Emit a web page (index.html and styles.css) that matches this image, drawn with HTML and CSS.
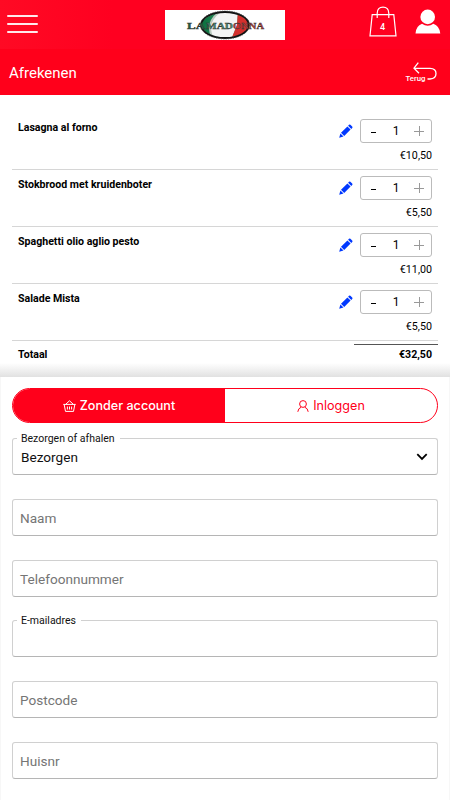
FILE: index.html
```html
<!DOCTYPE html>
<html lang="nl">
<head>
<meta charset="utf-8">
<title>Afrekenen</title>
<link rel="stylesheet" href="styles.css">
</head>
<body>
<svg class="defs" width="0" height="0">
  <symbol id="pencil" viewBox="0 0 14 14"><path d="M10 .8Q10.7.1 11.4.8L13.2 2.6Q13.9 3.3 13.2 4L12.3 4.9 9.1 1.7ZM8.4 2.4 11.6 5.6 5.2 12 2 8.8ZM1.4 9.5 4.5 12.6.2 13.8Z" fill="#0038ff"/></symbol>
</svg>
<header class="topbar">
  <div class="burger"><i></i><i></i><i></i></div>
  <svg class="logo" width="120" height="30" viewBox="0 0 120 30">
    <defs>
      <clipPath id="oval"><ellipse cx="60" cy="15" rx="23.5" ry="12.5"/></clipPath>
      <linearGradient id="silk"><stop offset="0" stop-color="#096b3b"/><stop offset=".3" stop-color="#1d8551"/><stop offset="1" stop-color="#7fae93"/></linearGradient>
    </defs>
    <rect width="120" height="30" fill="#fff"/>
    <g clip-path="url(#oval)"><rect x="35" width="50" height="30" fill="url(#silk)"/><path d="M57 0Q38 13 49 30H66L72 15 73 0Z" fill="#f4f4f4"/><path d="M57 0Q38 13 49 30" fill="none" stroke="#b9c8be" stroke-width="2"/><path d="M73 0 72 15 66 30H86V0Z" fill="#d4302d"/></g>
    <ellipse cx="60" cy="15" rx="23.8" ry="13" fill="none" stroke="#111" stroke-width="1.8"/>
    <ellipse cx="60" cy="15" rx="24.6" ry="13.9" fill="none" stroke="#444" stroke-width=".9" stroke-dasharray="1.2 1.2"/>
    <g class="logo-text"><text x="22" y="19" textLength="18" lengthAdjust="spacingAndGlyphs" fill="#216442">LA</text><text x="41" y="19" textLength="27" lengthAdjust="spacingAndGlyphs" fill="#4d8f70">MAD</text><text x="68" y="19" textLength="31" lengthAdjust="spacingAndGlyphs" fill="#bd403b">ONNA</text></g>
  </svg>
  <div class="actions">
    <svg width="28" height="31" viewBox="0 0 28 31"><g fill="none" stroke="#fff" stroke-width="1.2"><path d="M3.2 8.6H24.8L27 29.8H1Z"/><path d="M8.2 12V7.2Q8.4 1.2 14 1.2T19.8 7.2V12"/></g><text class="count" x="13.5" y="24" text-anchor="middle">4</text></svg>
    <svg width="26" height="25" viewBox="0 0 26 25"><circle cx="12.7" cy="7.9" r="7.3" fill="#fff"/><path d="M.5 24.5Q1 17 7 14.8 12.7 18.5 18.4 14.8 24.5 17 25.3 24.5Z" fill="#fff"/></svg>
  </div>
</header>
<div class="titlebar">
  <h1>Afrekenen</h1>
  <svg class="back" width="33" height="20" viewBox="0 0 33 20"><path d="M13.3.7 9 6.2 14 11.2M9.2 6.3H25Q31 6.4 31 11.5T25 17H22.5" fill="none" stroke="#fff" stroke-width="1.3"/><text x="0.5" y="18.8" textLength="20" lengthAdjust="spacingAndGlyphs">Terug</text></svg>
</div>
<main>
  <section class="cart">
    <div class="item"><b>Lasagna al forno</b><svg class="pencil"><use href="#pencil"/></svg><div class="side"><div class="stepper"><span class="minus"></span><span>1</span><span class="plus"></span></div><div class="price">€10,50</div></div></div>
    <div class="item"><b>Stokbrood met kruidenboter</b><svg class="pencil"><use href="#pencil"/></svg><div class="side"><div class="stepper"><span class="minus"></span><span>1</span><span class="plus"></span></div><div class="price">€5,50</div></div></div>
    <div class="item"><b>Spaghetti olio aglio pesto</b><svg class="pencil"><use href="#pencil"/></svg><div class="side"><div class="stepper"><span class="minus"></span><span>1</span><span class="plus"></span></div><div class="price">€11,00</div></div></div>
    <div class="item"><b>Salade Mista</b><svg class="pencil"><use href="#pencil"/></svg><div class="side"><div class="stepper"><span class="minus"></span><span>1</span><span class="plus"></span></div><div class="price">€5,50</div></div></div>
    <div class="total"><b>Totaal</b><b class="sum">€32,50</b></div>
  </section>
  <section class="checkout">
    <div class="tabs">
      <div class="tab active"><svg width="13" height="12" viewBox="0 0 13 12" fill="none" stroke="#fff"><path d="M.3 4.4H12.7M1.2 4.6 2.5 11.4H10.5L11.8 4.6M2.8 4.2 6.5.8 10.2 4.2M4.4 6.5V9.5M6.5 6.5V9.5M8.6 6.5V9.5"/></svg><span class="guest">Zonder account</span></div>
      <div class="tab"><svg width="12" height="12" viewBox="0 0 12 12" fill="none" stroke="#ff001b"><circle cx="6" cy="4" r="3.4"/><path d="M.8 11.8Q1.2 8.2 4.2 7.2M11.2 11.8Q10.8 8.2 7.8 7.2"/></svg><span class="login">Inloggen</span></div>
    </div>
    <form>
      <div class="field"><label>Bezorgen of afhalen</label><span class="value">Bezorgen</span><svg class="chevron" width="12" height="8" viewBox="0 0 12 8"><path d="M1.3 1.2 6 5.9 10.7 1.2" fill="none" stroke="#000" stroke-width="1.8"/></svg></div>
      <div class="field"><span>Naam</span></div>
      <div class="field"><span>Telefoonnummer</span></div>
      <div class="field"><label>E-mailadres</label></div>
      <div class="field"><span>Postcode</span></div>
      <div class="field"><span>Huisnr</span></div>
    </form>
  </section>
</main>
</body>
</html>
```
FILE: styles.css
```css
* { box-sizing: border-box; }
body { margin: 0; height: 800px; overflow: hidden; background: #fff; color: #000; font-family: Roboto, sans-serif; font-size: 11px; }
svg { display: block; flex: none; }
.defs { position: absolute; }
.topbar { height: 49px; background: linear-gradient(90deg, #ff0a24, #ff0020 25%); display: grid; grid-template-columns: 165px 120px 1fr; align-items: start; }
.burger { padding: 15px 0 0 7px; display: grid; gap: 6px; }
.burger i { width: 31px; height: 2px; background: #ffe9ec; border-radius: 1px; }
.logo { margin-top: 10px; }
.logo-text { font: bold 8.5px "Liberation Serif", serif; stroke: #333; stroke-width: .35px; }
.actions { display: flex; justify-content: flex-end; gap: 18px; padding: 6px 9px 0 0; }
.actions svg + svg { margin-top: 3px; }
.count { font-size: 9px; font-weight: 500; fill: #fff; }
.titlebar { height: 46px; background: #ff001b; color: #fff; display: flex; align-items: center; justify-content: space-between; padding: 0 12px 0 9px; }
h1 { margin: 1px 0 0; font-size: 15px; font-weight: 400; line-height: 20px; }
.back { margin-top: -1px; }
.back text { font: 500 7.6px Roboto, sans-serif; fill: #fff; }
.cart { padding: 18px 12px 0; height: 282px; background: linear-gradient(#fff, #e1e1e1) bottom / 100% 14px no-repeat; }
.item { height: 57px; border-bottom: 1px solid #d6d6d6; display: flex; padding: 6px 6px 0; align-items: flex-start; }
.item b { flex: 1; line-height: 14px; font-size: 10.6px; margin-top: 1.5px; }
.pencil { width: 14px; height: 14px; margin: 5px 7px 0 0; }
.side { width: 72px; }
.stepper { height: 24px; border: 1px solid #bbb; border-radius: 3px; display: grid; grid-template-columns: 24px 22px 24px; align-items: center; justify-items: center; font-size: 12px; }
.minus { width: 5px; height: 1px; background: #000; margin-top: 3px; }
.plus { width: 10px; height: 10px; background: linear-gradient(#999, #999) center / 10px 1px no-repeat, linear-gradient(#999, #999) center / 1px 10px no-repeat; }
.price { text-align: right; line-height: 14px; margin-top: 6px; font-size: 10.7px; }
.total { display: flex; justify-content: space-between; padding: 0 0 0 6px; height: 24px; font-size: 10.6px; }
.total b { line-height: 14px; padding-top: 7px; }
.total .sum { width: 84px; height: 20px; margin-top: 3px; padding: 3px 6px 0 0; text-align: right; border-top: 1px solid #555; }
.checkout { padding: 11px 11px 0; height: 423px; border-left: 1px solid #f7f7f7; border-right: 1px solid #f7f7f7; background: #fff; }
.tabs { height: 35px; border: 1px solid #ff001b; border-radius: 18px; overflow: hidden; display: grid; grid-template-columns: 1fr 1fr; font: 400 12.6px Inter, sans-serif; }
.tab { display: flex; align-items: center; justify-content: center; gap: 4px; color: #ff001b; white-space: nowrap; }
.active { background: #ff001b; color: #fff; }
.guest { font-weight: 500; }
form { margin-top: 15px; display: grid; gap: 23.8px; }
.field { position: relative; height: 37px; border: 1px solid #d0d0d0; border-bottom-color: #b5b5b5; border-radius: 3px; display: flex; align-items: center; justify-content: space-between; padding: 1px 9px 0 7px; font-size: 13.6px; color: #757575; }
.field label { position: absolute; left: 4px; top: -7px; padding: 0 5px 0 4px; background: #fff; color: #111; font-size: 10.5px; line-height: 13px; }
.field .value { color: #111; padding-left: 1px; margin-top: -1px; }
```
